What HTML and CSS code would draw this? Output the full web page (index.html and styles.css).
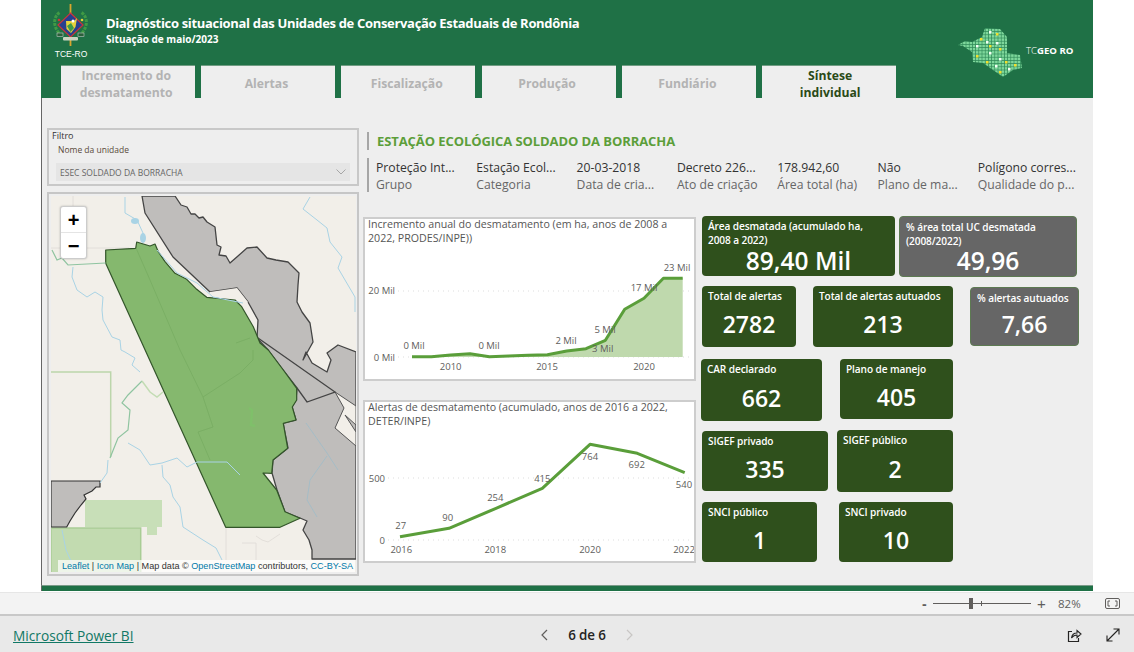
FILE: index.html
```html
<!DOCTYPE html>
<html lang="pt-BR">
<head>
<meta charset="utf-8">
<title>Diagnóstico situacional das Unidades de Conservação Estaduais de Rondônia</title>
<link rel="stylesheet" href="styles.css">
</head>
<body>
<main class="report">
  <header class="banner">
    <div class="banner-main">
      <div class="masthead">
        <div class="seal">
          <svg class="seal-art" viewBox="53 4 36 44" width="36" height="44" aria-hidden="true">
            <rect x="69.600" y="4" width="1.800" height="42" fill="#d9a62e"/>
            <path d="M59 33C53 26 53 17 60 12M82 33C88 26 88 17 81 12" fill="none" stroke="#3f9a45" stroke-width="3" stroke-dasharray="3 1"/>
            <circle cx="59" cy="20" r="1.300" fill="#c9353a"/><circle cx="82" cy="20" r="1.300" fill="#e6d23c"/>
            <path d="M70.500 13L83 25L70.500 37L58 25Z" fill="#27408f" stroke="#c9353a" stroke-width="1.200"/>
            <path d="M66 21H74L77 18L75.500 27L71 33L66.500 29Z" fill="#e6d23c"/>
            <path d="M67 26L71 23L74 28L70.500 32Z" fill="#3d9a4a"/>
            <circle cx="73" cy="21" r="1.500" fill="#fff"/>
            <rect x="57" y="33" width="6" height="3.500" fill="#2b5f3a" stroke="#ddd" stroke-width=".5"/>
            <rect x="78" y="33" width="6" height="3.500" fill="#2b5f3a" stroke="#ddd" stroke-width=".5"/>
            <rect x="63" y="37" width="15" height="3.500" rx="1" fill="#c9d4c0"/>
          </svg>
          <span class="seal-name">TCE-RO</span>
        </div>
        <div class="titles">
          <h1 class="title">Diagnóstico situacional das Unidades de Conservação Estaduais de Rondônia</h1>
          <p class="subtitle">Situação de maio/2023</p>
        </div>
      </div>
      <nav class="tabs">
        <a class="tab">Incremento do desmatamento</a>
        <a class="tab">Alertas</a>
        <a class="tab">Fiscalização</a>
        <a class="tab">Produção</a>
        <a class="tab">Fundiário</a>
        <a class="tab tab-active">Síntese individual</a>
      </nav>
    </div>
    <div class="brand">
      <svg class="brand-map" viewBox="956 27 68 52" width="68" height="52" aria-hidden="true">
        <defs>
          <pattern id="cells" x="0" y="0" width="3.200" height="3.200" patternUnits="userSpaceOnUse">
            <rect width="3.200" height="3.200" fill="#2f8a58"/>
            <rect width="2.500" height="2.500" fill="#7ed79b"/>
          </pattern>
        </defs>
        <path d="M958 45L965 41L972 42L982 37L985 28L1000 29L1007 37L1007 53L1020 55L1022 68L1013 70L1003 77L983 63L973 62L972 52L963 46Z" fill="url(#cells)"/>
        <g fill="#f2e02c">
          <rect x="980" y="38" width="2.500" height="2.500"/><rect x="996" y="33" width="2.500" height="2.500"/><rect x="989" y="45" width="2.500" height="2.500"/>
          <rect x="999" y="48" width="2.500" height="2.500"/><rect x="976" y="55" width="2.500" height="2.500"/><rect x="986" y="61" width="2.500" height="2.500"/>
          <rect x="1005" y="61" width="2.500" height="2.500"/><rect x="1014" y="64" width="2.500" height="2.500"/><rect x="999" y="71" width="2.500" height="2.500"/>
        </g>
        <g fill="#f4fff4">
          <rect x="989" y="31" width="2.500" height="2.500"/><rect x="986" y="41" width="2.500" height="2.500"/><rect x="976" y="45" width="2.500" height="2.500"/>
          <rect x="989" y="52" width="2.500" height="2.500"/><rect x="996" y="42" width="2.500" height="2.500"/><rect x="999" y="58" width="2.500" height="2.500"/>
          <rect x="1008" y="68" width="2.500" height="2.500"/><rect x="995" y="65" width="2.500" height="2.500"/>
        </g>
      </svg>
      <span class="brand-name"><span class="brand-light">TC</span>GEO RO</span>
    </div>
  </header>

  <section class="canvas">
    <div class="col-left">
      <div class="filter">
        <div class="filter-title">Filtro</div>
        <div class="filter-field">Nome da unidade</div>
        <div class="select">
          <span>ESEC SOLDADO DA BORRACHA</span>
          <svg viewBox="0 0 10 6" width="10" height="6" aria-hidden="true"><path d="M.5.5L5 5L9.500.5" fill="none" stroke="#a6a6a6"/></svg>
        </div>
      </div>
      <div class="map">
        <svg class="map-art" viewBox="51 196 305 376" width="305" height="376" aria-hidden="true">
          <rect x="51" y="196" width="305" height="376" fill="#f2efe9"/>
          <g fill="none" stroke="#dedbd5" stroke-width=".8">
            <path d="M226 528V560M242 543H256V560M256 536L262 540L268 542L280 534"/>
            <path d="M51 248H129V255M73 196V248"/>
          </g>
          <path d="M51 372H110.700V457" fill="none" stroke="#bcd6ab" stroke-width="1.500"/>
          <path d="M85 500H162V527H157V535H147V527H85Z" fill="#c8dfb8"/>
          <path d="M51 528H140.700V573H51Z" fill="#c2dbb0" stroke="#a9cd95" stroke-width="1.500"/>
          <path d="M51 481H100V487L96 487L92 491L84 495L86 499L81 505L75 513L70 521L66.700 527H51Z" fill="#bfbdbb" stroke="#333" stroke-width="1.200"/>
          <path d="M142 196L145 213L173 257L210 292L237 288L248 302L258 320L257 338L268 350L283 370L297 388L296 400L292 407L296 420L283 423L288 448L273 460L272 473L277 490L285 512L300 518L307 521L303 530L309 540L312 550L312 559H356V352L338 345L327 353L331 360L327 372L312 363L306 352L303 360L313 342L310 323L302 312L297 302L298 285L299 273L288 262L276 260L267 258L257 247L247 248L238 256L230 263L226 256L219 255L221 247L217 245L215 227L207 222L203 217L199 218L195 214L191 214L187 207L181 205L175 196Z" fill="#bfbdbb" stroke="#444" stroke-width="1.300" stroke-linejoin="round"/>
          <path d="M335 392L356 406V425L345 415L356 432V446L335 428L344 408Z" fill="#f2efe9" stroke="#555" stroke-width="1"/>
          <path d="M258 338L335 392L307 402L297 388" fill="none" stroke="#444" stroke-width="1.300"/>
          <path d="M255 336L262 352" fill="none" stroke="#444" stroke-width="1"/>
          <path d="M210 292L237 288L248 302L245 305L235 300L206 297Z" fill="#f2efe9"/>
          <path d="M105.700 250L135.700 248.300L136.700 242L143.300 244L150 246L155 244L158.300 251.700L165 261.700L175 273.300L186.700 279.300L196.700 289.300L206.700 297.300L235 300L241.700 306.700L253.300 326.700L260 343L268.300 350L283.300 370L296.700 388.300L296.700 400L292.300 407L296 420L283.300 423.300L287.700 448.300L273 460L271.700 473.300L263 473L276.700 490L285 511.700L300 518.300L280 527.300H225.700L105.700 263.300Z" fill="#85b86e" stroke="#33552a" stroke-width="1.200" stroke-linejoin="round"/>
          <g fill="none" stroke="#76aa60" stroke-width=".7">
            <path d="M180 350L203 397L213 427L198 432L210 460M203 397L240 373L253 360V350"/>
            <path d="M136 248L150 280L180 350"/>
            <path d="M236 343L250 338"/>
          </g>
          <path d="M249 408L252 410L251 425L255 426" fill="none" stroke="#7fc06a" stroke-width="2.400"/>
          <g fill="none" stroke="#a9d3e5" stroke-width="1">
            <path d="M125 197L125 213L137 220L143 233L142 242"/>
            <path d="M157 250L177 273L197 283L213 297L243 303"/>
            <path d="M310 197L303 209L317 220L327 228L330 242L342 257L338 268L345 280L355 297V312"/>
            <path d="M73 267L72 277L77 290L87 297L95 292L103 297L102 310L103 320L112 337L120 340L121 350L125 352L135 358L132 365L140 372"/>
            <path d="M128 443L140 450L150 465L162 463L177 458L187 467L197 462L227 462L240 475"/>
            <path d="M162 465L163 477L170 485L173 497L180 507L183 527L203 540L216 548L222 560"/>
            <path d="M108 460L107 473L100 483"/>
            <path d="M62 530L66 550L76 572"/>
          </g>
          <ellipse cx="135" cy="221" rx="4" ry="3" fill="#a9d3e5"/>
          <ellipse cx="143" cy="238" rx="3" ry="5" fill="#a9d3e5"/>
          <path d="M306 423L327 453L338 470M327 456L310 480L307 500L317 517" fill="none" stroke="#a2bcc7" stroke-width=".9"/>
          <path d="M52 250L57 260L62 258L68 265L105.700 263M142 381L135 388L128 395L122 403L130 410L128 430L118 438L112 453L110 458" fill="none" stroke="#8fc4a0" stroke-width="1.200"/>
          <path d="M142 381L150 392L157 397L163 392" fill="none" stroke="#c3dcb4" stroke-width="1.500"/>
        </svg>
        <div class="zoom-ctl">
          <span class="zoom-btn">+</span>
          <span class="zoom-btn">−</span>
        </div>
        <div class="attribution"><a>Leaflet</a> | <a>Icon Map</a> | Map data © <a>OpenStreetMap</a> contributors, <a>CC-BY-SA</a></div>
      </div>
    </div>

    <div class="col-right">
      <h2 class="unit">ESTAÇÃO ECOLÓGICA SOLDADO DA BORRACHA</h2>
      <div class="meta">
        <div class="meta-item"><span class="meta-value">Proteção Int...</span><span class="meta-label">Grupo</span></div>
        <div class="meta-item"><span class="meta-value">Estação Ecol...</span><span class="meta-label">Categoria</span></div>
        <div class="meta-item"><span class="meta-value">20-03-2018</span><span class="meta-label">Data de cria...</span></div>
        <div class="meta-item"><span class="meta-value">Decreto 226...</span><span class="meta-label">Ato de criação</span></div>
        <div class="meta-item"><span class="meta-value">178.942,60</span><span class="meta-label">Área total (ha)</span></div>
        <div class="meta-item"><span class="meta-value">Não</span><span class="meta-label">Plano de ma...</span></div>
        <div class="meta-item"><span class="meta-value">Polígono corres...</span><span class="meta-label">Qualidade do p...</span></div>
      </div>
      <div class="panels">
        <div class="charts">
          <figure class="chart chart-first">
            <figcaption class="chart-title">Incremento anual do desmatamento (em ha, anos de 2008 a 2022, PRODES/INPE))</figcaption>
            <svg class="chart-svg" viewBox="365 245 329 134" width="329" height="134" role="img">
              <path class="grid" d="M398 291H690M398 357H690"/>
              <path class="area" d="M412 356.700L431.400 356.700L450.700 355L470 353.700L489.400 356.700L508.700 356L528 355.300L547.400 354.700L566.700 351L586 348.700L605.400 340.300L624.700 309.300L644 298.300L663.400 278.300L682.700 278.300V357H412Z"/>
              <path class="line" d="M412 356.700L431.400 356.700L450.700 355L470 353.700L489.400 356.700L508.700 356L528 355.300L547.400 354.700L566.700 351L586 348.700L605.400 340.300L624.700 309.300L644 298.300L663.400 278.300L682.700 278.300"/>
              <text class="axis end" x="395" y="294">20 Mil</text>
              <text class="axis end" x="395" y="360.500">0 Mil</text>
              <text class="axis mid" x="450.700" y="370">2010</text>
              <text class="axis mid" x="547" y="370">2015</text>
              <text class="axis mid" x="644" y="370">2020</text>
              <text class="axis mid" x="414" y="349">0 Mil</text>
              <text class="axis mid" x="489" y="349">0 Mil</text>
              <text class="axis mid" x="566" y="343.500">2 Mil</text>
              <text class="axis mid" x="605" y="333">5 Mil</text>
              <text class="axis mid" x="602.700" y="352">3 Mil</text>
              <text class="axis mid" x="644" y="291">17 Mil</text>
              <text class="axis mid" x="677" y="271">23 Mil</text>
            </svg>
          </figure>
          <figure class="chart">
            <figcaption class="chart-title">Alertas de desmatamento (acumulado, anos de 2016 a 2022, DETER/INPE)</figcaption>
            <svg class="chart-svg" viewBox="365 428 329 133" width="329" height="133" role="img">
              <path class="grid" d="M388 478H690M388 540H690"/>
              <path class="line" d="M400 536.700L449 528.300L496 508.300L542.300 488.300L590 444.300L637.300 453.300L684.700 472.700"/>
              <text class="axis end" x="385" y="481.500">500</text>
              <text class="axis end" x="385" y="544">0</text>
              <text class="axis mid" x="401.300" y="553">2016</text>
              <text class="axis mid" x="495.300" y="553">2018</text>
              <text class="axis mid" x="590" y="553">2020</text>
              <text class="axis mid" x="684" y="553">2022</text>
              <text class="axis mid" x="400.700" y="529">27</text>
              <text class="axis mid" x="447.700" y="521">90</text>
              <text class="axis mid" x="495.300" y="501">254</text>
              <text class="axis mid" x="542.300" y="481.500">415</text>
              <text class="axis mid" x="590" y="459.500">764</text>
              <text class="axis mid" x="636.700" y="468">692</text>
              <text class="axis mid" x="684" y="487.500">540</text>
            </svg>
          </figure>
        </div>
        <div class="cards">
          <div class="row row-a">
            <div class="card card-area"><div class="card-label">Área desmatada (acumulado ha, 2008 a 2022)</div><div class="card-value value-xl">89,40 Mil</div></div>
            <div class="card card-gray card-pct"><div class="card-label">% área total UC desmatada (2008/2022)</div><div class="card-value value-xl">49,96</div></div>
          </div>
          <div class="row row-b">
            <div class="card card-total"><div class="card-label">Total de alertas</div><div class="card-value">2782</div></div>
            <div class="card card-autuados"><div class="card-label">Total de alertas autuados</div><div class="card-value">213</div></div>
            <div class="card card-gray card-pct-alert"><div class="card-label">% alertas autuados</div><div class="card-value">7,66</div></div>
          </div>
          <div class="row row-c">
            <div class="card card-car"><div class="card-label">CAR declarado</div><div class="card-value">662</div></div>
            <div class="card card-plano"><div class="card-label">Plano de manejo</div><div class="card-value">405</div></div>
          </div>
          <div class="row row-d">
            <div class="card card-sigef-pv"><div class="card-label">SIGEF privado</div><div class="card-value">335</div></div>
            <div class="card card-sigef-pb"><div class="card-label">SIGEF público</div><div class="card-value">2</div></div>
          </div>
          <div class="row row-e">
            <div class="card card-snci-pb"><div class="card-label">SNCI público</div><div class="card-value">1</div></div>
            <div class="card card-snci-pv"><div class="card-label">SNCI privado</div><div class="card-value">10</div></div>
          </div>
        </div>
      </div>
    </div>
  </section>
</main>

<div class="zoombar">
  <span class="zoom-sign">-</span>
  <div class="slider"><span class="slider-thumb"></span><span class="slider-tick"></span></div>
  <span class="zoom-sign zoom-plus">+</span>
  <span class="zoom-pct">82%</span>
  <svg class="fit" viewBox="0 0 15 11" width="15" height="11" aria-hidden="true">
    <rect x=".5" y=".5" width="14" height="10" rx="1.500" fill="none" stroke="#605e5c"/>
    <path d="M5 3H3V8H5M10 3H12V8H10" fill="none" stroke="#605e5c"/>
  </svg>
</div>

<footer class="footer">
  <a class="pbi-link">Microsoft Power BI</a>
  <div class="pager">
    <svg viewBox="0 0 8 12" width="8" height="12" aria-hidden="true"><path d="M7 1L2 6L7 11" fill="none" stroke="#605e5c" stroke-width="1.200"/></svg>
    <span class="pager-text">6 de 6</span>
    <svg viewBox="0 0 8 12" width="8" height="12" aria-hidden="true"><path d="M1 1L6 6L1 11" fill="none" stroke="#c8c6c4" stroke-width="1.200"/></svg>
  </div>
  <div class="footer-actions">
    <svg viewBox="0 0 15 15" width="15" height="15" aria-hidden="true">
      <path d="M5 3.500H1.500V13.500H11.500V10" fill="none" stroke="#252423" stroke-width="1.200"/>
      <path d="M4.500 10C5 6.500 7.500 5 10 5V2.500L14 6L10 9.500V7C8 7 6 8 4.500 10Z" fill="none" stroke="#252423" stroke-width="1.100"/>
    </svg>
    <svg viewBox="0 0 14 14" width="14" height="14" aria-hidden="true">
      <path d="M1 13L13 1M7.500 1H13V6.500M1 7.500V13H6.500" fill="none" stroke="#252423" stroke-width="1.100"/>
    </svg>
  </div>
</footer>
</body>
</html>
```
FILE: styles.css
```css
* { box-sizing: border-box; }
html, body { margin: 0; padding: 0; }
body {
  width: 1134px;
  height: 652px;
  overflow: hidden;
  background: #fff;
  font-family: "Open Sans", "Noto Sans", sans-serif;
  color: #333;
  display: flex;
  flex-direction: column;
}
h1, h2, p, figure { margin: 0; }

.report {
  margin-left: 41px;
  width: 1052px;
  height: 592px;
  flex: none;
  display: flex;
  flex-direction: column;
}

/* banner */
.banner {
  height: 98px;
  flex: none;
  background: #1f7146;
  display: flex;
  justify-content: space-between;
}
.banner-main { width: 856px; display: flex; flex-direction: column; }
.masthead { height: 65px; display: flex; padding-left: 12px; }
.seal { width: 36px; display: flex; flex-direction: column; align-items: center; padding-top: 4px; }
.seal-art { display: block; flex: none; }
.seal-name { font: 8.500px/10px "Liberation Sans", sans-serif; color: #fff; margin-top: 1px; white-space: nowrap; }
.titles { margin-left: 17px; padding-top: 14px; color: #fff; }
.title { font-size: 13px; font-weight: 700; line-height: 18px; letter-spacing: -.32px; white-space: nowrap; }
.subtitle { font-size: 10px; font-weight: 700; line-height: 13px; margin-top: 1px; white-space: nowrap; }

.tabs { height: 33px; display: flex; gap: 6.300px; padding-left: 19.700px; }
.tab {
  width: 134px;
  background: #eee;
  color: #b3b3b3;
  border-top: 1px solid #6f9c82;
  font-size: 12.200px;
  font-weight: 700;
  line-height: 17px;
  text-align: center;
  display: flex;
  align-items: center;
  justify-content: center;
  padding: 3px 19px 0 16px;
}
.tab-active { color: #2a4a17; padding: 3px 14px 0 16px; }

.brand { width: 137px; display: flex; align-items: flex-start; padding-top: 27px; }
.brand-map { flex: none; display: block; }
.brand-name { color: #fff; font-size: 9.600px; font-weight: 700; margin: 18px 0 0 2px; white-space: nowrap; line-height: 12px; }
.brand-light { font-weight: 300; }

/* canvas */
.canvas {
  height: 487px;
  flex: none;
  background: #eee;
  border-left: 1px solid #666;
  display: flex;
  padding: 30px 0 0 5px;
  gap: 4px;
}
.report::after {
  content: "";
  display: block;
  height: 5px;
  flex: none;
  background: #1f7146;
  border-top: 1px solid #7a9a88;
  border-left: 1px solid #666;
}

.col-left { width: 312px; flex: none; display: flex; flex-direction: column; gap: 6px; }
.filter { height: 58px; border: 2px solid #c8c8c8; padding: 0 7px 0 3px; background: #eee; }
.filter-title { font-size: 9px; line-height: 11px; color: #333; }
.filter-field { font-size: 8.500px; line-height: 11px; color: #5a4a3a; margin: 3px 0 0 6px; }
.select {
  height: 18px;
  margin: 8px 0 0 4px;
  background: #e5e5e5;
  display: flex;
  align-items: center;
  justify-content: space-between;
  padding: 0 4px;
  font-size: 8.500px;
  color: #666;
}
.map {
  height: 384px;
  border: 2px solid #c6c6c6;
  padding: 2px;
  position: relative;
  background: #eee;
}
.map-art { display: block; }
.zoom-ctl {
  position: absolute;
  left: 11px;
  top: 12px;
  width: 27px;
  height: 53px;
  background: #fff;
  border: 1px solid #ccc;
  border-radius: 3px;
  box-shadow: 0 0 2px rgba(0,0,0,.25);
  display: flex;
  flex-direction: column;
}
.zoom-btn {
  flex: 1;
  display: flex;
  align-items: center;
  justify-content: center;
  font: 700 20px/1 "Liberation Sans", sans-serif;
  color: #000;
}
.zoom-btn + .zoom-btn { border-top: 1px solid #e4e4e4; }
.attribution {
  position: absolute;
  right: 2px;
  bottom: 2px;
  width: 297px;
  height: 12px;
  background: rgba(255,255,255,.72);
  padding-left: 4px;
  font: 9.100px/12px "Liberation Sans", sans-serif;
  color: #333;
  white-space: nowrap;
}
.attribution a { color: #0078a8; }

.col-right { flex: 1; padding-top: 4px; min-width: 0; }
.unit {
  margin-left: 4px;
  height: 18px;
  border-left: 2px solid #a6a6a6;
  padding-left: 8px;
  font-size: 13px;
  line-height: 18px;
  font-weight: 700;
  letter-spacing: -.08px;
  color: #5c9e3a;
  white-space: nowrap;
}
.meta {
  margin: 8px 0 0 4px;
  height: 34px;
  border-left: 2px solid #a6a6a6;
  padding-left: 7px;
  padding-top: 1px;
  display: flex;
}
.meta-item { width: 100.300px; flex: none; display: flex; flex-direction: column; font-size: 12.200px; line-height: 17px; white-space: nowrap; }
.meta-value { color: #333; }
.meta-label { color: #666; }

.panels { display: flex; margin-top: 25px; gap: 6px; }
.charts { width: 333px; flex: none; display: flex; flex-direction: column; gap: 19px; }
.chart { height: 163px; background: #fff; border: 2px solid #cdcdcd; }
.chart-first { height: 164px; }
.chart-title { font-size: 10.650px; line-height: 14px; color: #555; padding: 0 4px 0 3px; margin-top: -2px; height: 28px; }
.chart-svg { display: block; }
.grid { stroke: #ddd; stroke-width: 1; stroke-dasharray: 1 4; fill: none; }
.line { fill: none; stroke: #5a9e3a; stroke-width: 3; stroke-linejoin: round; }
.area { fill: #bfd9ad; }
.axis { font-size: 9.500px; fill: #605e5c; }
.end { text-anchor: end; }
.mid { text-anchor: middle; }

/* cards */
.cards { flex: 1; min-width: 0; }
.row { display: flex; align-items: flex-start; }
.row-a { gap: 4px; margin-top: -1px; }
.row-b { gap: 17px; margin-top: 9px; }
.row-c { gap: 18px; margin: 12px 0 0 -1px; }
.row-d { gap: 9px; margin-top: 9px; }
.row-e { gap: 22px; margin-top: 10px; }
.card {
  background: #2f501c;
  border-radius: 4px;
  color: #fff;
  display: flex;
  flex-direction: column;
  padding: 3px 6px 1px;
}
.card-gray { background: #666; border: 1px solid #5d7a52; }
.card-label { font-size: 10.100px; line-height: 14px; font-weight: 600; letter-spacing: -.1px; }
.card-area .card-label { padding-right: 16px; }
.card-value {
  flex: 1;
  display: flex;
  align-items: center;
  justify-content: center;
  font-size: 23px;
  font-weight: 600;
  line-height: 1;
}
.value-xl { font-size: 24.500px; line-height: .9; }

.card-area { width: 193px; height: 60px; }
.card-pct { width: 178px; height: 61px; }
.card-total { width: 94px; height: 61px; }
.card-autuados { width: 140px; height: 61px; }
.card-pct-alert { width: 109px; height: 59px; margin-top: 1px; }
.card-car { width: 121px; height: 62px; }
.card-plano { width: 113px; height: 60px; }
.card-sigef-pv { width: 126px; height: 60px; margin-top: 1px; }
.card-sigef-pb { width: 116px; height: 62px; }
.card-snci-pb { width: 115px; height: 60px; }
.card-snci-pv { width: 114px; height: 60px; }

/* zoom row */
.zoombar {
  height: 24px;
  flex: none;
  background: #f3f3f3;
  border-top: 1px solid #e6e6e6;
  border-bottom: 2px solid #c8c8c8;
  display: flex;
  align-items: center;
  padding-left: 922px;
  color: #605e5c;
}
.zoom-sign { font: 700 14px/1 "Liberation Sans", sans-serif; width: 11px; }
.slider { width: 98px; height: 1px; background: #605e5c; position: relative; }
.slider-thumb { position: absolute; left: 36px; top: -5px; width: 4px; height: 11px; background: #605e5c; }
.slider-tick { position: absolute; left: 48px; top: -2px; width: 1px; height: 5px; background: #605e5c; }
.zoom-plus { font-weight: 400; margin-left: 6px; width: 12px; font-size: 15px; }
.zoom-pct { font-size: 11.500px; margin-left: 9px; width: 47px; }
.fit { display: block; }

/* footer */
.footer {
  flex: 1;
  background: #e9e9e9;
  display: grid;
  grid-template-columns: 1fr auto 1fr;
  align-items: center;
  padding: 2px 14px 0 13px;
}
.pbi-link { font-size: 13.700px; color: #117865; text-decoration: underline; }
.pager { display: flex; align-items: center; gap: 20px; justify-self: center; margin-left: 41px; }
.pager svg { display: block; }
.pager-text { font-size: 13.400px; font-weight: 600; color: #252423; letter-spacing: -.1px; }
.footer-actions { display: flex; justify-content: flex-end; gap: 24px; align-items: center; }
.footer-actions svg { display: block; }
```
